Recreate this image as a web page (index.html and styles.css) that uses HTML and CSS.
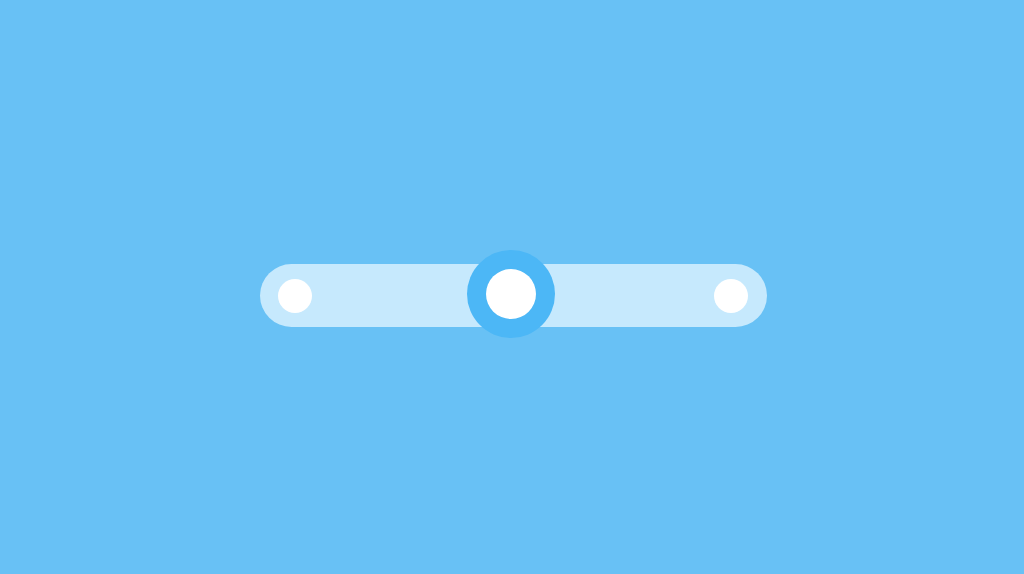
FILE: index.html
```html
<!DOCTYPE html>
<html lang="en">
<head>
  <meta charset="UTF-8" />
  <meta name="viewport" content="width=device-width, initial-scale=1.0">
  <title>Slider</title>
  <link rel="stylesheet" href="styles.css">
</head>
<body>
  <div class="stage">
    <div class="track">
      <span class="dot"></span>
      <span class="knob"><span class="knob-center"></span></span>
      <span class="dot"></span>
    </div>
  </div>
</body>
</html>
```

FILE: styles.css
```css
* { margin: 0; padding: 0; box-sizing: border-box; }
html, body { height: 100%; }
body {
  background: #68c1f5;
  font-family: "Liberation Sans", Arial, sans-serif;
  overflow: hidden;
}
.stage {
  display: flex;
  align-items: center;
  justify-content: center;
  height: 100%;
  padding: 17px 0 0 3px;
}
.track {
  display: flex;
  align-items: center;
  justify-content: space-between;
  width: 507px;
  height: 63px;
  padding: 0 19px 0 18px;
  border-radius: 32px;
  background: #c6e9fd;
}
.dot {
  width: 34px;
  height: 34px;
  border-radius: 50%;
  background: #fff;
}
.knob {
  display: flex;
  align-items: center;
  justify-content: center;
  width: 88px;
  height: 88px;
  margin: 0 4px 4px 0;
  border-radius: 50%;
  background: #4cb7f6;
}
.knob-center {
  width: 50px;
  height: 50px;
  border-radius: 50%;
  background: #fff;
}
```
